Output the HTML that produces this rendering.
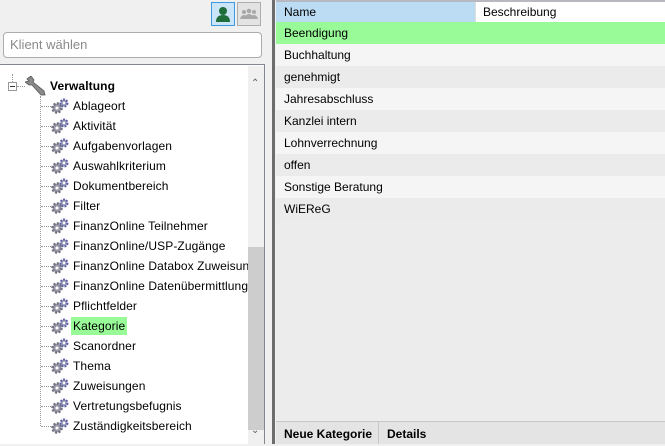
<!DOCTYPE html>
<html><head><style>
*{margin:0;padding:0;box-sizing:border-box}
body{width:665px;height:444px;overflow:hidden;background:#f0f0f0;font-family:"Liberation Sans",sans-serif;font-size:12px;color:#000;position:relative}
.a{position:absolute}
.row{position:absolute;left:276px;width:389px;height:22px;line-height:22px;padding-left:8px;font-size:12px}
.ti{position:absolute;left:73px;height:18px;line-height:18px;font-size:12px;letter-spacing:0.1px;white-space:nowrap}
.g{position:absolute;left:50px;width:20px;height:18px}
.h{position:absolute;left:41px;width:10px;border-top:1px dotted #999}
</style></head><body>
<div class="a" style="left:211px;top:2px;width:24px;height:24px;background:#cce4f7;border:1px solid #3c9be0"></div>
<svg class="a" style="left:214px;top:5px" width="18" height="18" viewBox="0 0 18 18"><circle cx="9" cy="6" r="4" fill="#1f6e3a"/><path d="M2 17 Q2 10 9 10 Q16 10 16 17Z" fill="#1f6e3a"/></svg>
<div class="a" style="left:237px;top:2px;width:24px;height:24px;background:#e3e3e3;border:1px solid #adadad"></div>
<svg class="a" style="left:240px;top:7px" width="18" height="14" viewBox="0 0 18 14"><g fill="#a8a8a8"><circle cx="4" cy="5" r="2"/><circle cx="9" cy="4" r="2.3"/><circle cx="14" cy="5" r="2"/><path d="M0 12Q1 8 4 8Q7 8 8 12Z"/><path d="M5 12Q5 7 9 7Q13 7 13 12Z"/><path d="M10 12Q11 8 14 8Q17 8 18 12Z"/></g></svg>
<div class="a" style="left:3px;top:32px;width:259px;height:26px;background:#fff;border:1px solid #acacac;border-radius:4px;padding-left:6px;line-height:24px;color:#8a8a8a;font-size:13px">Klient wählen</div>
<div class="a" style="left:0;top:64px;width:265px;height:380px;background:#fff;border-top:1px solid #828790;border-right:1px solid #828790"></div>
<div class="a" style="left:8px;top:82px;width:9px;height:9px;border:1px solid #999;background:#fff"></div>
<div class="a" style="left:10px;top:86px;width:5px;border-top:1px solid #333"></div>
<div class="a" style="left:12px;top:74px;height:8px;border-left:1px dotted #999"></div>
<div class="a" style="left:17px;top:86px;width:8px;border-top:1px dotted #999"></div>
<svg class="a" style="left:25px;top:76px" width="22" height="20" viewBox="0 0 22 20"><path d="M2 3 L6 0 L9 4 L8 6 L19 15 L20 19 L16 19 L7 9 L4 9 L0 6 L4 5 Z" fill="#8a8a8a" stroke="#555" stroke-width="0.8"/></svg>
<div class="ti" style="left:50px;top:77px;font-weight:bold">Verwaltung</div>
<div class="a" style="left:40px;top:96px;height:330px;border-left:1px dotted #999"></div>
<div id="items"></div>
<div class="a" style="left:248px;top:66px;width:16px;height:378px;background:#f0f0f0"></div>
<div class="a" style="left:248px;top:247px;width:16px;height:183px;background:#cdcdcd"></div>
<div class="a" style="left:264px;top:64px;width:8px;height:380px;background:#f0f0f0;border-left:1px solid #828790"></div>
<div class="a" style="left:272px;top:0;width:3px;height:444px;background:#6d6d6d"></div>
<div class="a" style="left:251px;top:78px;font-size:10px;color:#606060">&#8963;</div>
<div class="a" style="left:251px;top:425px;font-size:10px;color:#606060">&#8964;</div>
<script>
var t=["Ablageort","Aktivität","Aufgabenvorlagen","Auswahlkriterium","Dokumentbereich","Filter","FinanzOnline Teilnehmer","FinanzOnline/USP-Zugänge","FinanzOnline Databox Zuweisungen","FinanzOnline Datenübermittlungen","Pflichtfelder","Kategorie","Scanordner","Thema","Zuweisungen","Vertretungsbefugnis","Zuständigkeitsbereich"];
var h="";
var gear='<svg width="20" height="18" viewBox="0 0 20 18"><circle cx="7" cy="11" r="4.5" fill="#9a9aa8" stroke="#6f6f80" stroke-width="2.5" stroke-dasharray="2 1.5"/><circle cx="7" cy="11" r="1.5" fill="#fff"/><circle cx="14" cy="6" r="3.5" fill="#a0a0b8" stroke="#5a60a8" stroke-width="2" stroke-dasharray="1.8 1.3"/><circle cx="14" cy="6" r="1.2" fill="#fff"/></svg>';
t.forEach(function(s,i){var y=106+i*20;
h+='<div class="h" style="top:'+y+'px"></div><div class="g" style="top:'+(y-9)+'px">'+gear+'</div><div class="ti" style="top:'+(y-9)+'px'+(s=="Kategorie"?';background:#98fb98;padding:0 2px;left:71px':'')+'">'+s+'</div>';});
document.getElementById("items").innerHTML=h;
</script>
<div class="a" style="left:276px;top:0;width:389px;height:2px;background:#b8b8c0"></div>
<div class="a" style="left:276px;top:2px;width:199px;height:20px;background:#bcdcf4;line-height:20px;padding-left:8px">Name</div>
<div class="a" style="left:475px;top:2px;width:190px;height:20px;background:#fff;border-left:1px solid #ddd;line-height:20px;padding-left:7px">Beschreibung</div>
<div class="row" style="top:22px;background:#98fb98">Beendigung</div>
<div class="row" style="top:44px;background:#f5f5f5">Buchhaltung</div>
<div class="row" style="top:66px;background:#ebebeb">genehmigt</div>
<div class="row" style="top:88px;background:#f5f5f5">Jahresabschluss</div>
<div class="row" style="top:110px;background:#ebebeb">Kanzlei intern</div>
<div class="row" style="top:132px;background:#f5f5f5">Lohnverrechnung</div>
<div class="row" style="top:154px;background:#ebebeb">offen</div>
<div class="row" style="top:176px;background:#f5f5f5">Sonstige Beratung</div>
<div class="row" style="top:198px;background:#ebebeb">WiEReG</div>
<div class="a" style="left:276px;top:220px;width:389px;height:202px;background:#ececec"></div>
<div class="a" style="left:276px;top:421px;width:389px;height:23px;background:#e4e4e4;border-top:1px solid #c8c8c8"></div>
<div class="a" style="left:277px;top:422px;width:102px;height:22px;border-right:1px solid #c8c8c8;line-height:24px;padding-left:7px;font-weight:bold">Neue Kategorie</div>
<div class="a" style="left:380px;top:422px;width:100px;height:22px;line-height:24px;padding-left:7px;font-weight:bold">Details</div>
</body></html>
